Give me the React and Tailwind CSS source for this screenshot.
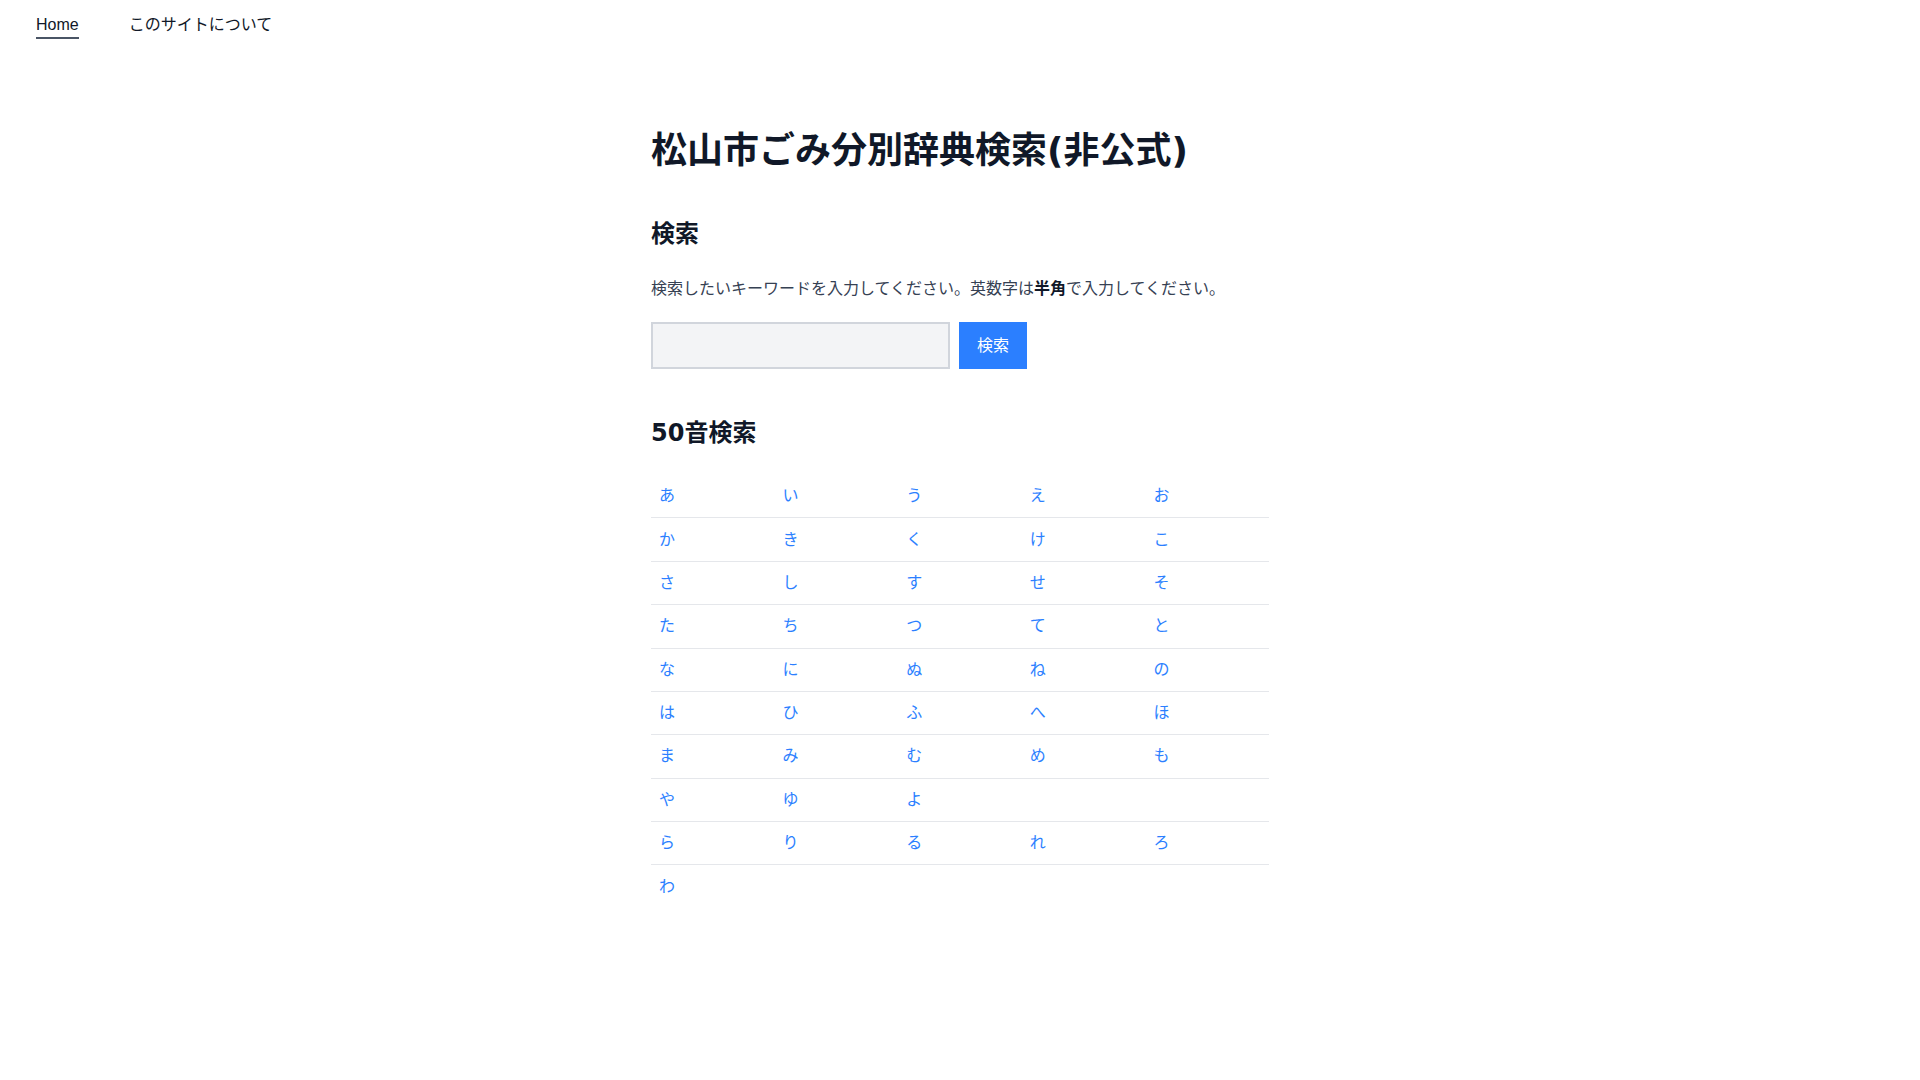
const rows = [
  ["あ", "い", "う", "え", "お"],
  ["か", "き", "く", "け", "こ"],
  ["さ", "し", "す", "せ", "そ"],
  ["た", "ち", "つ", "て", "と"],
  ["な", "に", "ぬ", "ね", "の"],
  ["は", "ひ", "ふ", "へ", "ほ"],
  ["ま", "み", "む", "め", "も"],
  ["や", "ゆ", "よ", "", ""],
  ["ら", "り", "る", "れ", "ろ"],
  ["わ", "", "", "", ""],
];

const App = () => {
  return (
    <div className="min-h-screen bg-white text-gray-900 font-['Liberation_Sans','Noto_Sans_CJK_JP',sans-serif]">
      {/* Navigation */}
      <nav className="flex items-start gap-[50px] pl-9 pt-[13px]">
        <a href="#" className="text-base leading-6 text-gray-900 border-b-2 border-gray-600">
          Home
        </a>
        <a href="#" className="text-base leading-6 text-gray-900">
          このサイトについて
        </a>
      </nav>

      <main className="w-[618px] mx-auto mt-[92px] pb-20">
        <h1 className="text-4xl leading-10 font-bold text-gray-900 font-['DejaVu_Sans','Noto_Sans_CJK_JP',sans-serif]">
          松山市ごみ分別辞典検索(非公式)
        </h1>

        {/* Search */}
        <h2 className="mt-[47px] text-2xl leading-8 font-bold text-gray-900">検索</h2>
        <p className="mt-[27px] text-base leading-6 text-gray-700">
          検索したいキーワードを入力してください。英数字は
          <strong className="font-bold text-gray-900">半角</strong>
          で入力してください。
        </p>
        <form className="mt-[21px] flex items-stretch" onSubmit={(e) => e.preventDefault()}>
          <input
            type="text"
            className="w-[299px] h-[47px] border-2 border-gray-300 bg-gray-100 px-3 focus:outline-none"
          />
          <button type="submit" className="ml-[9px] h-[47px] w-[68px] bg-blue-500 text-white text-base">
            検索
          </button>
        </form>

        {/* 50音 */}
        <h2 className="mt-[48px] text-2xl leading-8 font-bold text-gray-900 font-['DejaVu_Sans','Noto_Sans_CJK_JP',sans-serif]">
          50音検索
        </h2>
        <div className="mt-[26px]">
          {rows.map((row, i) => (
            <div
              key={i}
              className={`grid grid-cols-5 ${i < rows.length - 1 ? "border-b border-gray-200" : ""}`}
            >
              {row.map((kana, j) => (
                <div key={j} className="px-2 py-[9.2px] text-base leading-6">
                  {kana && (
                    <a href="#" className="text-blue-500">
                      {kana}
                    </a>
                  )}
                </div>
              ))}
            </div>
          ))}
        </div>
      </main>
    </div>
  );
};

export default App;
